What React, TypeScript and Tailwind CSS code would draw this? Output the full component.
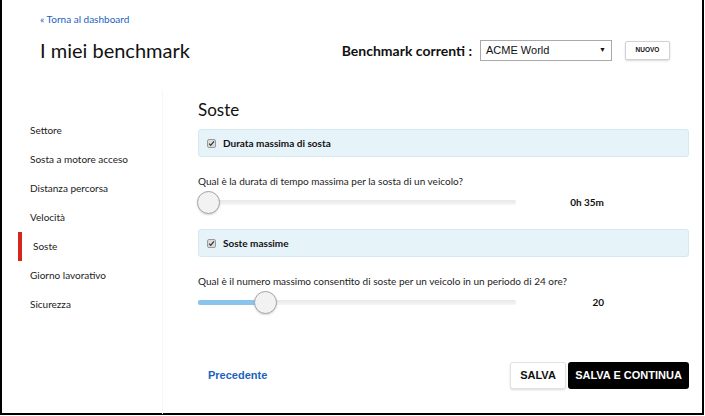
import React from 'react';

const menu = [
  'Settore',
  'Sosta a motore acceso',
  'Distanza percorsa',
  'Velocità',
  'Soste',
  'Giorno lavorativo',
  'Sicurezza',
];

const CheckBox: React.FC = () => (
  <span className="flex h-[9px] w-[9px] items-center justify-center rounded-[2px] border border-[#9a9a9a] bg-[#dcdcdc]">
    <svg width="7" height="7" viewBox="0 0 8 8">
      <path d="M1.2 4.2 L3.1 6.1 L6.8 1.6" fill="none" stroke="#333" strokeWidth="1.4" />
    </svg>
  </span>
);

const Slider: React.FC<{ pos: number; value: string }> = ({ pos, value }) => (
  <div className="flex h-[22px] items-center">
    <div className="relative h-[22px] w-[318px]">
      <div className="absolute left-0 right-0 top-[9px] h-[5px] rounded-[2px] bg-gradient-to-b from-[#e8e8e8] to-[#f6f6f6]" />
      <div
        className="absolute left-0 top-[9px] h-[5px] rounded-l-[2px] bg-[#89c4ee]"
        style={{ width: pos }}
      />
      <div
        className="absolute top-0 h-[23px] w-[23px] rounded-full border border-[#a5a5a5] bg-[#f2f2f2] shadow-[0_1px_2px_rgba(0,0,0,0.15)]"
        style={{ left: pos - 11 }}
      />
    </div>
    <div className="w-[88px] text-right text-[10px] font-bold text-[#111]">{value}</div>
  </div>
);

const Section: React.FC<{ title: string; question: string; pos: number; value: string }> = ({
  title,
  question,
  pos,
  value,
}) => (
  <div>
    <div className="flex h-[28px] items-center gap-[7px] rounded-[3px] border border-[#d6e8f0] bg-[#e6f3f9] pl-[8px]">
      <CheckBox />
      <span className="text-[10px] font-bold text-[#111]">{title}</span>
    </div>
    <p className="mt-[17px] text-[10px] leading-[14px] text-[#222]">{question}</p>
    <div className="mt-[3px]">
      <Slider pos={pos} value={value} />
    </div>
  </div>
);

export default function App() {
  return (
    <div className="h-[416px] w-[705px] bg-white">
      <div
        className="h-[415px] w-[704px] border-2 border-t-0 border-black text-[#222]"
        style={{ fontFamily: 'Lato, "Open Sans", sans-serif' }}
      >
        <div className="pl-[38px] pr-[32px] pt-[12px]">
          <a className="block text-[10px] leading-[14px] text-[#1b62c0]">« Torna al dashboard</a>
          <div className="mt-[10px] flex h-[28px] items-center justify-between">
            <h1 className="text-[20px] leading-[28px] text-[#111]">I miei benchmark</h1>
            <div className="flex items-center">
              <span className="text-[14px] font-bold text-[#111]">Benchmark correnti :</span>
              <div
                className="ml-[8px] flex h-[21px] w-[132px] items-center justify-between border border-[#a9a9a9] pl-[5px] pr-[5px] text-[11px] text-[#111]"
                style={{ fontFamily: '"Liberation Sans", Arial, sans-serif' }}
              >
                <span>ACME World</span>
                <span className="text-[7px]">▼</span>
              </div>
              <button
                className="ml-[13px] h-[19px] w-[45px] rounded-[2px] border border-[#d2d2d2] bg-white text-[6.5px] font-bold text-[#111] shadow-[0_1px_2px_rgba(0,0,0,0.15)]"
                style={{ fontFamily: '"Liberation Sans", Arial, sans-serif' }}
              >
                NUOVO
              </button>
            </div>
          </div>
        </div>

        <div className="mt-[26px] flex">
          <nav className="h-[324px] w-[161px] border-r border-[#f6f6f6] pt-[26px]">
            {menu.map((item) =>
              item === 'Soste' ? (
                <div
                  key={item}
                  className="ml-[16px] flex h-[29px] items-center border-l-4 border-[#d3261c] pl-[11px] text-[10px] text-[#222]"
                >
                  {item}
                </div>
              ) : (
                <div key={item} className="flex h-[29px] items-center pl-[28px] text-[10px] text-[#222]">
                  {item}
                </div>
              )
            )}
          </nav>

          <main className="flex-1 pl-[35px] pr-[13px]">
            <h2 className="mt-[9px] text-[17px] leading-[22px] text-[#111]">Soste</h2>
            <div className="mt-[8px]">
              <Section
                title="Durata massima di sosta"
                question="Qual è la durata di tempo massima per la sosta di un veicolo?"
                pos={10}
                value="0h 35m"
              />
            </div>
            <div className="mt-[16px]">
              <Section
                title="Soste massime"
                question="Qual è il numero massimo consentito di soste per un veicolo in un periodo di 24 ore?"
                pos={67}
                value="20"
              />
            </div>

            <div
              className="mt-[49px] flex items-center justify-between"
              style={{ fontFamily: '"Liberation Sans", Arial, sans-serif' }}
            >
              <a className="pl-[10px] text-[11px] font-bold text-[#1b62c0]">Precedente</a>
              <div className="flex gap-[2px]">
                <button className="h-[27px] w-[56px] rounded-[3px] border border-[#e2e2e2] bg-white text-[11px] font-bold text-[#111] shadow-[0_1px_2px_rgba(0,0,0,0.15)]">
                  SALVA
                </button>
                <button className="h-[27px] w-[121px] rounded-[3px] bg-black text-[11px] font-bold text-white">
                  SALVA E CONTINUA
                </button>
              </div>
            </div>
          </main>
        </div>
      </div>
    </div>
  );
}
